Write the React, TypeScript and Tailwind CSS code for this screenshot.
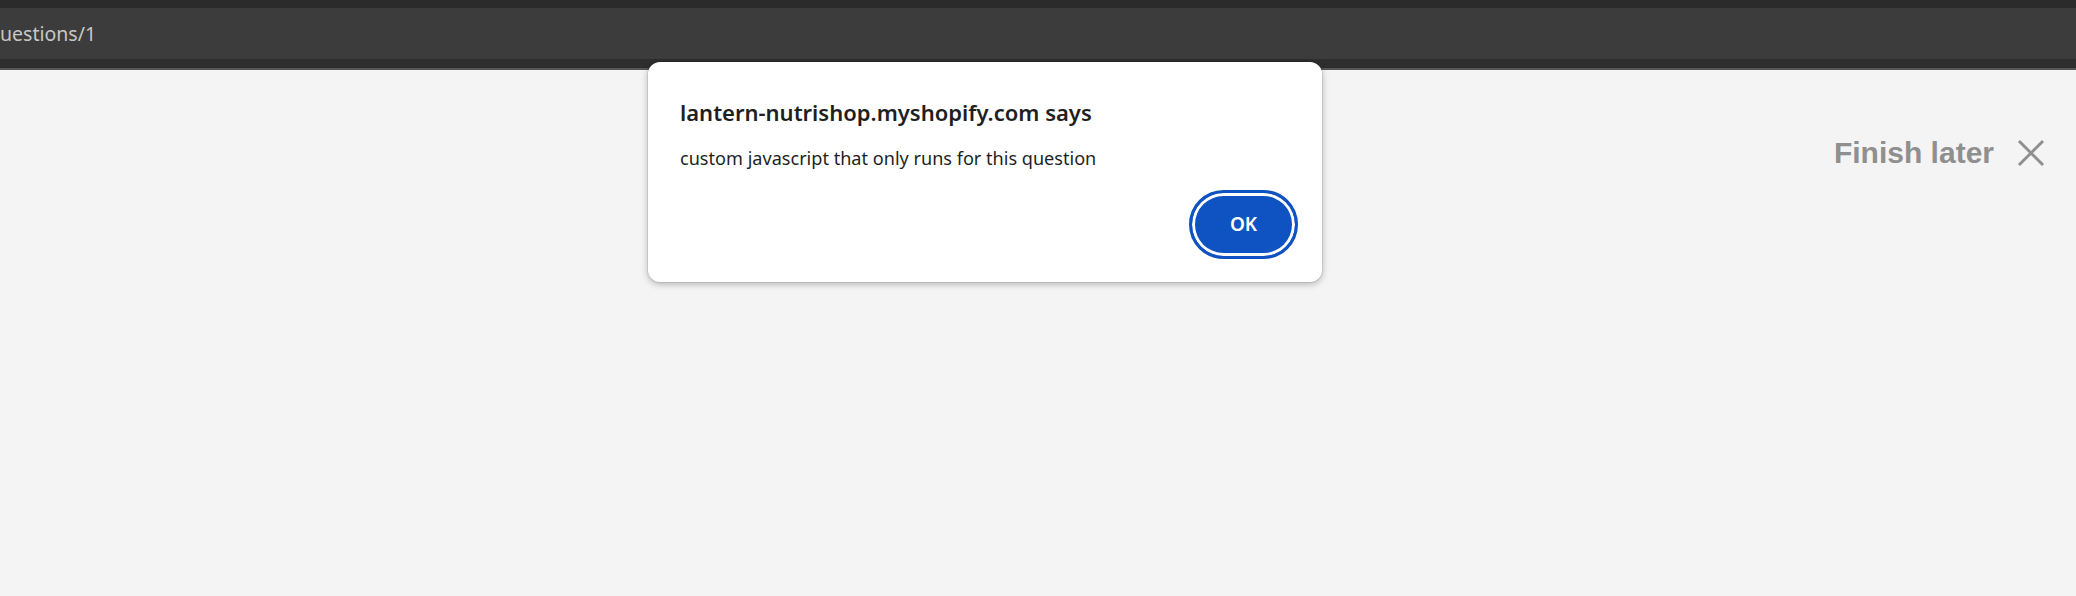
import React from "react";

export default function App() {
  return (
    <div className="relative min-h-[596px] w-full overflow-hidden bg-[#f4f4f4] font-['Noto_Sans',sans-serif]">
      {/* browser chrome */}
      <div className="h-[8px] bg-[#2b2b2b]" />
      <div className="flex h-[51px] items-center bg-[#3c3c3c]">
        <span className="pt-[1px] text-[19.5px] leading-none text-[#c7c7c7]">uestions/1</span>
      </div>
      <div className="h-[9px] bg-[#2e2e2e]" />
      <div className="h-[2px] bg-[#565656]" />

      {/* page */}
      <div className="flex items-center justify-end pr-[31px] pt-[68px]">
        <span className="font-['Liberation_Sans',sans-serif] text-[30px] font-bold leading-[30px] text-[#8f8f8f]">
          Finish later
        </span>
        <svg
          className="ml-[23px]"
          width="28"
          height="28"
          viewBox="0 0 28 28"
          fill="none"
          stroke="#8f8f8f"
          strokeWidth="3"
        >
          <path d="M2 2 L26 26 M26 2 L2 26" />
        </svg>
      </div>

      {/* alert dialog */}
      <div className="absolute left-[648px] top-[62px] flex h-[220px] w-[674px] flex-col rounded-[12px] bg-white pl-[32px] pr-[24px] pt-[35px] shadow-[0_0_0_1px_rgba(0,0,0,0.07),0_2px_7px_rgba(0,0,0,0.28)]">
        <div className="text-[22px] font-semibold leading-[30px] text-[#1f1f1f]">
          lantern-nutrishop.myshopify.com says
        </div>
        <div className="mt-[19px] text-[18.1px] leading-[24px] text-[#1f1f1f]">
          custom javascript that only runs for this question
        </div>
        <div className="mt-[20px] flex justify-end">
          <button className="flex h-[69px] w-[109px] items-center justify-center rounded-full border-[3px] border-[#0e53c1] bg-[#0e53c1] text-[19px] font-semibold text-white shadow-[inset_0_0_0_3px_#ffffff]">
            OK
          </button>
        </div>
      </div>
    </div>
  );
}
